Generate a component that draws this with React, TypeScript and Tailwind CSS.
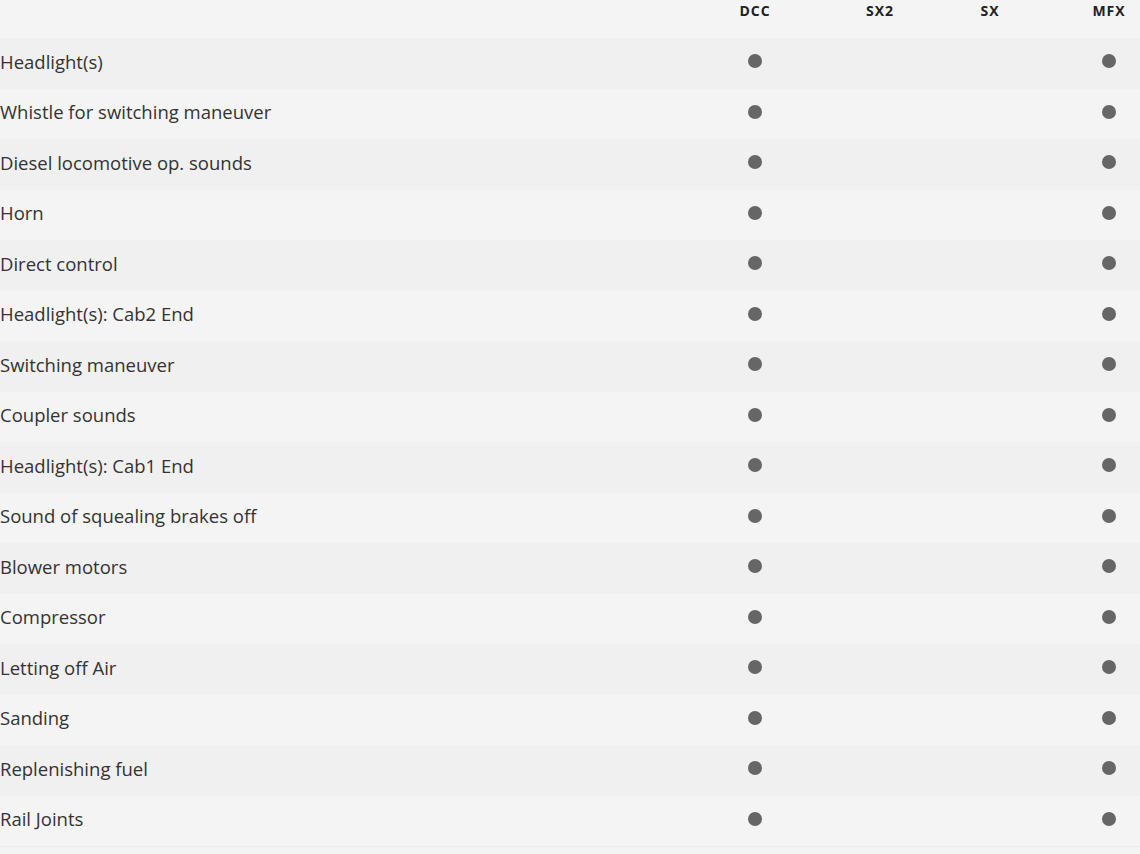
import React from "react";

const rows = [
  "Headlight(s)",
  "Whistle for switching maneuver",
  "Diesel locomotive op. sounds",
  "Horn",
  "Direct control",
  "Headlight(s): Cab2 End",
  "Switching maneuver",
  "Coupler sounds",
  "Headlight(s): Cab1 End",
  "Sound of squealing brakes off",
  "Blower motors",
  "Compressor",
  "Letting off Air",
  "Sanding",
  "Replenishing fuel",
  "Rail Joints",
];

function Dot() {
  return <span className="block w-[14px] h-[14px] rounded-full bg-[#666666]" />;
}

export default function App() {
  return (
    <div
      className="w-[1140px] h-[854px] bg-[#f4f4f4] text-[#333333] overflow-hidden"
      style={{ fontFamily: '"Open Sans", "Noto Sans", sans-serif' }}
    >
      <div className="grid grid-cols-[690px_130px_120px_100px_100px] h-[38px] text-[14px] font-bold tracking-[1px] text-[#222222]">
        <div />
        <div className="flex justify-center pt-[1px] leading-[20px]">DCC</div>
        <div className="flex justify-center pt-[1px] leading-[20px]">SX2</div>
        <div className="flex justify-center pt-[1px] leading-[20px]">SX</div>
        <div className="flex justify-center pt-[1px] pl-[38px] leading-[20px]">MFX</div>
      </div>
      {rows.map((r, i) => (
        <div
          key={r}
          className={`grid grid-cols-[690px_130px_120px_100px_100px] h-[50.5px] items-center pb-[4px] text-[18.5px] ${
            i % 2 === 0 ? "bg-[#f0f0f0]" : "bg-[#f4f4f4]"
          }`}
        >
          <div className="leading-[24px] pt-[1px]">{r}</div>
          <div className="flex justify-center">
            <Dot />
          </div>
          <div />
          <div />
          <div className="flex justify-center pl-[38px]">
            <Dot />
          </div>
        </div>
      ))}
      <div className="h-px bg-[#ebebeb]" />
    </div>
  );
}
